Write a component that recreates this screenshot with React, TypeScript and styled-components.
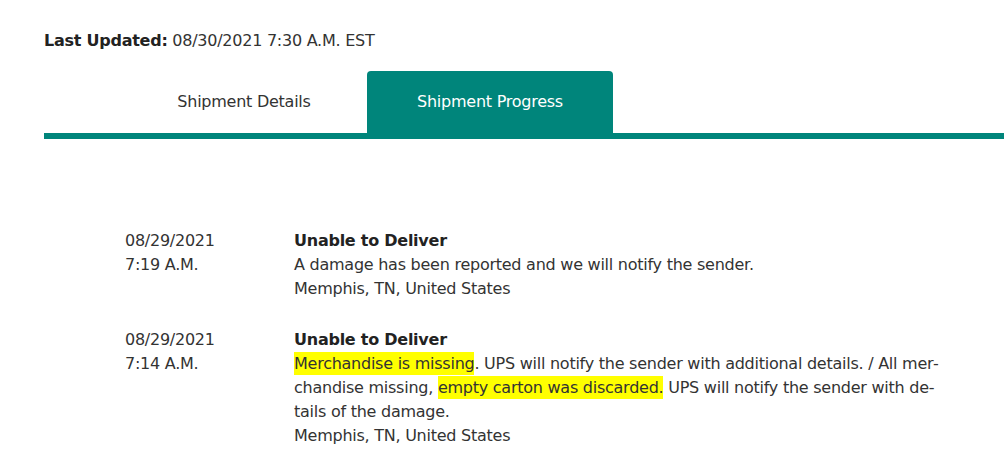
import React from "react";
import styled, { createGlobalStyle } from "styled-components";

const Global = createGlobalStyle`
  html, body { margin: 0; padding: 0; background: #ffffff; }
  body {
    font-family: "DejaVu Sans", "Liberation Sans", sans-serif;
    font-size: 16px;
    color: #333333;
  }
`;

const TEAL = "#00857b";

const Page = styled.div`
  width: 1004px;
  height: 468px;
  overflow: hidden;
  padding: 29px 0 0 44px;
  box-sizing: border-box;
  letter-spacing: -0.25px;
`;

const Updated = styled.div`
  line-height: 24px;
  font-size: 16px;
  color: #333;
`;

const Label = styled.b`
  font-weight: bold;
  color: #222;
`;

const TabBar = styled.div`
  margin-top: 18px;
  display: flex;
  padding-left: 77px;
  border-bottom: 6px solid ${TEAL};
`;

const Tab = styled.div<{ $active?: boolean }>`
  width: 246px;
  height: 62px;
  display: flex;
  align-items: center;
  justify-content: center;
  padding-bottom: 2px;
  box-sizing: border-box;
  border-radius: 4px 4px 0 0;
  background: ${(p) => (p.$active ? TEAL : "#ffffff")};
  color: ${(p) => (p.$active ? "#ffffff" : "#333333")};
  font-size: 16px;
`;

const List = styled.div`
  margin-top: 90px;
  padding-left: 81px;
  display: flex;
  flex-direction: column;
  gap: 27px;
`;

const Row = styled.div`
  display: grid;
  grid-template-columns: 169px 652px;
  line-height: 24px;
`;

const DateCol = styled.div`
  color: #333;
`;

const Body = styled.div`
  color: #333;
`;

const Title = styled.div`
  font-weight: bold;
  color: #222;
`;

const Mark = styled.span`
  background: #ffff00;
  padding: 2px 0;
`;

export default function App() {
  return (
    <>
      <Global />
      <Page>
        <Updated>
          <Label>Last Updated:</Label> 08/30/2021 7:30 A.M. EST
        </Updated>
        <TabBar>
          <Tab>Shipment Details</Tab>
          <Tab $active>Shipment Progress</Tab>
        </TabBar>
        <List>
          <Row>
            <DateCol>
              08/29/2021
              <br />
              7:19 A.M.
            </DateCol>
            <Body>
              <Title>Unable to Deliver</Title>
              <div>A damage has been reported and we will notify the sender.</div>
              <div>Memphis, TN, United States</div>
            </Body>
          </Row>
          <Row>
            <DateCol>
              08/29/2021
              <br />
              7:14 A.M.
            </DateCol>
            <Body>
              <Title>Unable to Deliver</Title>
              <div>
                <Mark>Merchandise is missing</Mark>. UPS will notify the sender with additional details. / All mer{"\u00AD"}chandise missing, <Mark>empty carton was discarded.</Mark> UPS will notify the sender with de{"\u00AD"}tails of the damage.
              </div>
              <div>Memphis, TN, United States</div>
            </Body>
          </Row>
        </List>
      </Page>
    </>
  );
}
